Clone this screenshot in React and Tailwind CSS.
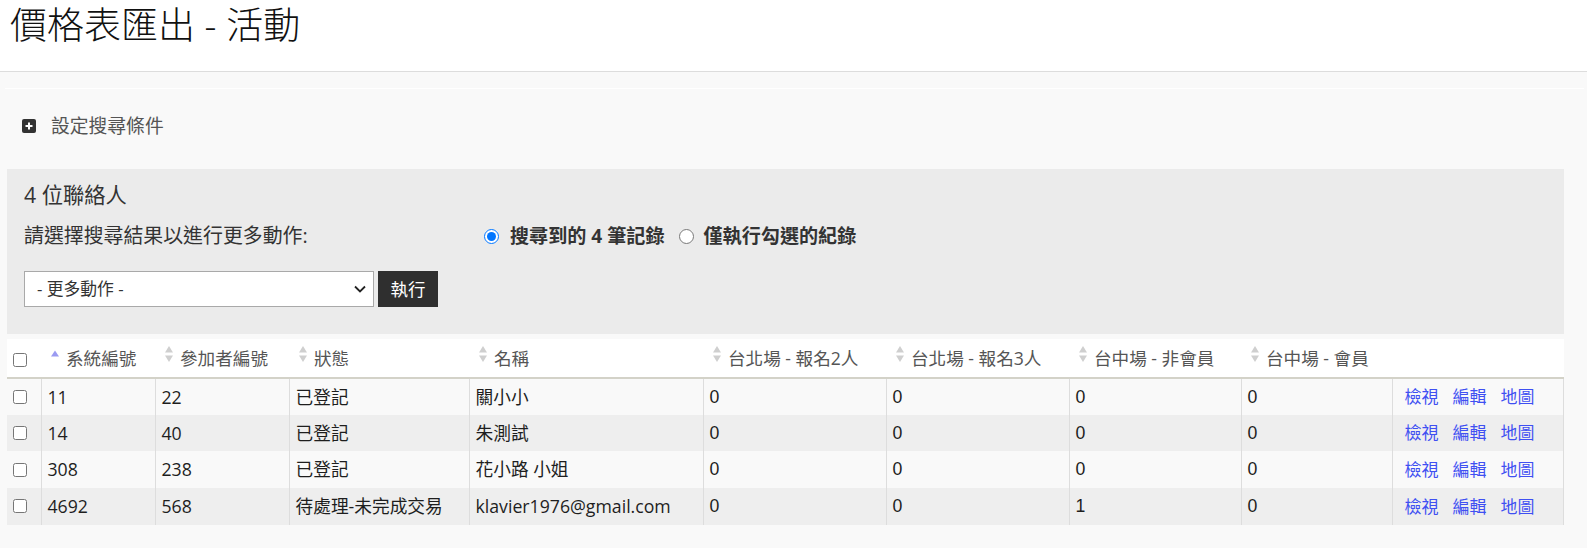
import React from "react";

const FONT = { fontFamily: '"Open Sans", "Noto Sans CJK TC", sans-serif' };

function SortIcon({ active }) {
  if (active) {
    return (
      <svg width="10" height="18" viewBox="0 0 10 18" className="shrink-0">
        <polygon points="1,11.5 5,5.5 9,11.5" fill="#9b9bf2" />
      </svg>
    );
  }
  return (
    <svg width="10" height="18" viewBox="0 0 10 18" className="shrink-0">
      <polygon points="1,7.5 5,1 9,7.5" fill="#cfcfcf" />
      <polygon points="1,10.5 5,17 9,10.5" fill="#cfcfcf" />
    </svg>
  );
}

const headers = [
  { label: "系統編號", active: true },
  { label: "參加者編號" },
  { label: "狀態" },
  { label: "名稱" },
  { label: "台北場 - 報名2人" },
  { label: "台北場 - 報名3人" },
  { label: "台中場 - 非會員" },
  { label: "台中場 - 會員" },
];

const rows = [
  ["11", "22", "已登記", "關小小", "0", "0", "0", "0"],
  ["14", "40", "已登記", "朱測試", "0", "0", "0", "0"],
  ["308", "238", "已登記", "花小路 小姐", "0", "0", "0", "0"],
  ["4692", "568", "待處理-未完成交易", "klavier1976@gmail.com", "0", "0", "1", "0"],
];

const widths = [34, 114, 134, 180, 234, 183, 183, 172, 151];

export default function App() {
  return (
    <div className="min-h-[548px] bg-[#f9f9f9] text-[#222]" style={FONT}>
      <div className="h-[72px] bg-white border-b border-[#dddddd] pl-[10px]">
        <h1 className="text-[37px] leading-[50px] font-light text-[#111]">價格表匯出 - 活動</h1>
      </div>

      <div className="ml-[5px] mr-[3px] mt-[16px] border-t border-white">
        <div className="pl-[2px] pr-[20px]">
          <div className="mt-[24px] h-[26px] flex items-center pl-[15px]">
            <span className="w-[14px] h-[14px] rounded-[2px] bg-[#333] flex items-center justify-center">
              <svg width="10" height="10" viewBox="0 0 10 10">
                <rect x="4" y="1.5" width="2" height="7" fill="#fff" />
                <rect x="1.5" y="4" width="7" height="2" fill="#fff" />
              </svg>
            </span>
            <span className="ml-[15px] text-[18.8px] text-[#555] leading-[26px]">設定搜尋條件</span>
          </div>

          <div className="mt-[30px] h-[165px] bg-[#ebebeb] pl-[17px] pt-[13px]">
            <div className="text-[21.3px] leading-[26px] text-[#333]">4 位聯絡人</div>
            <div className="mt-[14px] h-[28px] flex items-center">
              <span className="text-[19.9px] text-[#333] w-[460px]">請選擇搜尋結果以進行更多動作:</span>
              <label className="flex items-center">
                <input type="radio" name="r" defaultChecked className="w-[15px] h-[15px] m-0" />
                <span className="ml-[11px] text-[19.1px] font-bold text-[#333]">搜尋到的 4 筆記錄</span>
              </label>
              <label className="flex items-center ml-[14px]">
                <input type="radio" name="r" className="w-[15px] h-[15px] m-0" />
                <span className="ml-[10px] text-[19.1px] font-bold text-[#333]">僅執行勾選的紀錄</span>
              </label>
            </div>
            <div className="mt-[21px] flex items-center">
              <div className="w-[350px] h-[36px] bg-white border border-[#a9a9a9] flex items-center justify-between pl-[12px] pr-[7px]">
                <span className="text-[16.8px] text-[#333]">- 更多動作 -</span>
                <svg width="12" height="8" viewBox="0 0 12 8">
                  <path d="M1 1.5 L6 6.5 L11 1.5" fill="none" stroke="#222" strokeWidth="1.8" />
                </svg>
              </div>
              <button className="ml-[4px] w-[60px] h-[36px] bg-[#2f2f2f] text-white text-[17.5px] flex items-center justify-center">
                執行
              </button>
            </div>
          </div>

          <table className="mt-[5px] w-[1557px] table-fixed border-collapse">
            <colgroup>
              {widths.map((w, i) => (
                <col key={i} style={{ width: w }} />
              ))}
              <col />
            </colgroup>
            <thead>
              <tr className="bg-white h-[38px] border-b-2 border-[#d3d2c8]">
                <th className="pl-[6px] text-left align-middle">
                  <input type="checkbox" className="w-[14px] h-[14px] m-0 mt-[4px] block" />
                </th>
                {headers.map((h, i) => (
                  <th key={i} className="pl-[9px] text-left font-normal align-middle">
                    <div className="flex items-center">
                      <span className="mb-[8px] flex">
                        <SortIcon active={h.active} />
                      </span>
                      <span className="ml-[6px] text-[17.6px] text-[#555] whitespace-nowrap leading-[38px]">{h.label}</span>
                    </div>
                  </th>
                ))}
                <th></th>
              </tr>
            </thead>
            <tbody>
              {rows.map((r, ri) => (
                <tr key={ri} className={ri % 2 === 0 ? "bg-[#f9f9f9] h-[36.67px]" : "bg-[#eeeeee] h-[36.67px]"}>
                  <td className="pl-[6px] align-middle">
                    <input type="checkbox" className="w-[14px] h-[14px] m-0 block" />
                  </td>
                  {r.map((c, ci) => (
                    <td
                      key={ci}
                      className={
                        "border-l border-[#dddddd] pl-[6px] align-middle whitespace-nowrap text-[17.7px] text-[#1e1e1e] " +
                        (ci >= 4 ? "font-['Liberation_Sans','Noto_Sans_CJK_TC',sans-serif]" : "")
                      }
                    >
                      {c}
                    </td>
                  ))}
                  <td className="border-l border-r border-[#dddddd] pl-[12px] align-middle whitespace-nowrap">
                    <div className="flex gap-[14px] text-[17px] text-[#3f50f2]">
                      <a href="#" onClick={(e) => e.preventDefault()}>檢視</a>
                      <a href="#" onClick={(e) => e.preventDefault()}>編輯</a>
                      <a href="#" onClick={(e) => e.preventDefault()}>地圖</a>
                    </div>
                  </td>
                </tr>
              ))}
            </tbody>
          </table>
        </div>
      </div>
    </div>
  );
}
